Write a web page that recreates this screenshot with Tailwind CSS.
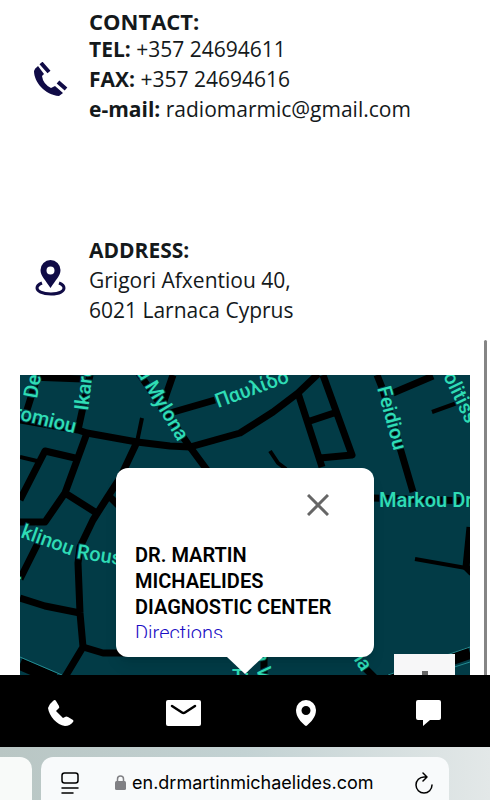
<!DOCTYPE html>
<html lang="en">

<head>
  <meta charset="UTF-8" />
  <meta name="viewport" content="width=device-width, initial-scale=1.0" />
  <title>Dr. Martin Michaelides - Contact</title>
  <script src="https://cdn.jsdelivr.net/npm/@tailwindcss/browser@4"></script>
</head>

<body class="bg-white h-screen flex flex-col overflow-hidden text-[#14191b] font-['Open_Sans',sans-serif]">

  <main class="relative flex-1 min-h-0 overflow-hidden px-5 pt-[7px]">

    <!-- Contact -->
    <section class="flex items-center gap-5 pl-[13px] h-[118px]">
      <svg viewBox="0 0 36 36" class="w-9 h-9 mt-7 shrink-0" fill="#100b46">
        <path d="M4 5Q2 6 1 9C1 20 12 33 26 34L30 31L22 24L18 26Q10 22 9 14L11 12L5 4Z" />
        <path d="M8 1l8 9M25 20l8 7" fill="none" stroke="#100b46" stroke-width="4" />
      </svg>
      <div class="text-[21px] leading-[30px]">
        <h2 class="font-bold text-[22px] leading-[26px]">CONTACT:</h2>
        <p><b class="font-bold">TEL:</b> +357 24694611</p>
        <p><b class="font-bold">FAX:</b> +357 24694616</p>
        <p><b class="font-bold">e-mail:</b> radiomarmic@gmail.com</p>
      </div>
    </section>

    <!-- Address -->
    <section class="flex items-center gap-5 pl-[13px] mt-[110px]">
      <svg viewBox="0 0 36 40" class="w-9 h-10 shrink-0" fill="#100b46">
        <path d="M9 23 Q4 25 4 28 C4 31 9 34 18 34 S31 31 31 28 Q31 25 26 23" fill="none" stroke="#100b46" stroke-width="3" />
        <path fill-rule="evenodd" d="M17.500 0a10 10 0 0 0-10 10c0 6 5 10 10 18 5-8 10-12 10-18A10 10 0 0 0 17.500 0zm0 6.500a4 4 0 1 1 0 8 4 4 0 0 1 0-8z" />
      </svg>
      <div class="text-[21px] leading-[30px]">
        <h2 class="font-bold">ADDRESS:</h2>
        <p>Grigori Afxentiou 40,</p>
        <p>6021 Larnaca Cyprus</p>
      </div>
    </section>

    <!-- Map -->
    <section class="relative mt-[50px] h-[300px] bg-[#023b46] overflow-hidden font-[Roboto,sans-serif]">
      <svg viewBox="0 0 450 300" preserveAspectRatio="xMidYMin slice" class="w-full h-full">
        <g fill="none" stroke="#000" stroke-width="7" stroke-linejoin="round">
          <path d="M10 2L63 4M17 3L7 35M70 0L58 55M0 45L58 55L67 58L117 67L150 71L170 72L220 58L253 37L278 18L298 -1" />
          <path d="M67 58L45 118L25 147H0M0 125L25 76L55 83M45 118L75 137" />
          <path d="M117 67L100 103L87 123L73 145L60 172L58 188L60 238L63 272L45 302M88 120L100 132" />
          <path d="M22 160L0 204M0 223L25 231L60 238M63 272L83 278H105" />
          <path d="M118 -3L170 72L187 95M153 0L145 23L141 36M150 38L195 25" />
          <path d="M278 18L302 92M303 0L332 80L300 83M290 46L317 37" />
          <path d="M357 0L363 15L393 117M373 18L413 1M353 123L450 126M450 152L446 192L452 198" />
          <path d="M244 280V300M340 288L355 303" />
          <path d="M0 82L17 86M122 43L117 67M250 76L258 88L266 94M412 37L437 28M395 184L446 193" stroke-width="4" />
          <path d="M0 289L35 304M368 306L450 278" stroke-width="12" />
          <path d="M0 282L42 300M368 300L450 272M425 295L450 287" stroke="#258b91" stroke-width="1" />
        </g>
        <g fill="#2fdcb5" stroke="#023b46" stroke-width="2" paint-order="stroke" font-size="20" font-weight="500">
          <text transform="translate(17 24) rotate(-80)">De</text>
          <text transform="translate(68 36) rotate(-83)">Ikaro</text>
          <text transform="translate(-7 43) rotate(14)">romiou</text>
          <text transform="translate(116 -3) rotate(59)">u Mylona</text>
          <text transform="translate(198 33) rotate(-20)">Παυλίδο</text>
          <text transform="translate(357 13) rotate(75)">Feidiou</text>
          <text transform="translate(423 1) rotate(64)">olitiss</text>
          <text x="359" y="132">Markou Dr</text>
          <text transform="translate(0 162) rotate(20)">klinou</text>
          <text transform="translate(56 183) rotate(9)">Rous</text>
          <text transform="translate(-6 213)">r</text>
          <text transform="translate(330 279) rotate(57)">na</text>
          <text transform="translate(235 276) rotate(84)">n V</text>
          <text transform="translate(212 309)">Ti</text>
        </g>
      </svg>

      <!-- Zoom control -->
      <button aria-label="Zoom in" class="absolute right-[15px] top-[279px] w-[61px] h-[61px] bg-[#f7f7f8] text-[#666]">
        <svg viewBox="0 0 61 61" class="w-full h-full" fill="currentColor">
          <path d="M28 17h6v11h11v6H34v11h-6V34H17v-6h11z" />
        </svg>
      </button>

      <!-- Info window -->
      <div class="absolute left-1/2 -translate-x-1/2 top-[93px] w-[258px] h-[189px] rounded-xl bg-white px-[19px] text-xl leading-[26px] text-black shadow-lg">
        <div class="flex justify-end h-[74px] pt-[26px] pr-[26px]">
          <button aria-label="Close" class="w-[22px] h-[22px]">
            <svg viewBox="0 0 22 22" fill="none" stroke="#666" stroke-width="3">
              <path d="M1 1l20 20M21 1L1 21" />
            </svg>
          </button>
        </div>
        <div class="h-24 overflow-hidden">
          <h3 class="font-semibold">DR. MARTIN<br />MICHAELIDES<br />DIAGNOSTIC CENTER</h3>
          <a href="#" class="block font-light text-[#1a0dc4]">Directions</a>
        </div>
        <svg viewBox="0 0 36 17" class="absolute left-1/2 -translate-x-1/2 top-full w-9" fill="#fff">
          <path d="M0 0H36L18 17z" />
        </svg>
      </div>
    </section>

    <!-- Scroll indicator -->
    <div class="absolute right-[3px] top-[340px] bottom-0 w-[3px] rounded-t-full bg-[#858585]"></div>
  </main>

  <!-- Quick actions -->
  <nav class="grid grid-cols-4 h-[72px] shrink-0 bg-black text-white">
    <a href="#" aria-label="Call" class="flex items-center justify-center pt-1">
      <svg viewBox="0 0 26 28" class="w-[26px] h-7" fill="currentColor">
        <path d="M5 2Q7 0 8 2L11 7Q12 9 10 10L8 12L15 19L17 18Q18 17 20 18L25 21Q26 22 25 23Q22 27 17 27C9 26 1 17 0 9Q1 5 5 2Z" />
      </svg>
    </a>
    <a href="#" aria-label="Email" class="flex items-center justify-center pt-1">
      <svg viewBox="0 0 35 26" class="w-[35px] h-[26px]">
        <rect width="35" height="26" rx="2" fill="currentColor" />
        <path d="M6 6L16 12.500Q17.500 13.500 19 12.500L29 6" fill="none" stroke="#000" stroke-width="2.500" stroke-linecap="round" />
      </svg>
    </a>
    <a href="#" aria-label="Location" class="flex items-center justify-center pt-1">
      <svg viewBox="0 0 20 26" class="w-5 h-[26px]" fill="currentColor">
        <path fill-rule="evenodd" d="M10 0A10 10 0 0 0 0 10c0 7 5 12 9 15.500q1 .8 2 0C15 22 20 17 20 10A10 10 0 0 0 10 0zm0 6a4.500 4.500 0 1 1 0 9 4.500 4.500 0 0 1 0-9z" />
      </svg>
    </a>
    <a href="#" aria-label="Message" class="flex items-center justify-center pt-1">
      <svg viewBox="0 0 26 26" class="w-[26px] h-[26px]" fill="currentColor">
        <path d="M2 0H23Q25 0 25 2V18Q25 20 23 20H14L7 26V20H2Q0 20 0 18V2Q0 0 2 0z" />
      </svg>
    </a>
  </nav>

  <!-- Browser bar -->
  <footer class="flex items-stretch gap-[9px] h-[53px] shrink-0 pt-[10px] bg-linear-to-r from-[#b9c6c4] via-[#c3d2d3] to-[#e3e8e8] text-black">
    <div class="w-8 rounded-tr-xl bg-[#f8faf9]"></div>
    <div class="flex-1 min-w-0 flex items-center rounded-t-xl bg-[#f8fafb] pl-5 pr-4 pt-2">
      <button aria-label="Page menu" class="w-[18px]">
        <svg viewBox="0 0 18 22" fill="none" stroke="currentColor" stroke-width="1.500" stroke-linecap="round">
          <rect x="1" y="1" width="16" height="10" rx="2.500" />
          <path d="M1 16H17M1 21H12" />
        </svg>
      </button>
      <svg viewBox="0 0 11 15" class="w-[11px] ml-9 mr-[6px] shrink-0" fill="#808084">
        <rect y="6" width="11" height="9" rx="1.500" />
        <path d="M2.500 7V4a3 3 0 0 1 6 0v3" fill="none" stroke="#808084" stroke-width="1.500" />
      </svg>
      <input type="text" aria-label="Address" value="en.drmartinmichaelides.com"
        class="flex-1 min-w-0 bg-transparent text-lg leading-6 font-[Inter,sans-serif] focus:outline-none" />
      <button aria-label="Reload" class="w-[18px]">
        <svg viewBox="0 0 18 22" fill="none" stroke="currentColor" stroke-width="1.500" stroke-linecap="round" stroke-linejoin="round">
          <path d="M12 5H9A8 8 0 1 0 17 13M8 1L12 5L8 9" />
        </svg>
      </button>
    </div>
    <div class="w-8"></div>
  </footer>
</body>

</html>
